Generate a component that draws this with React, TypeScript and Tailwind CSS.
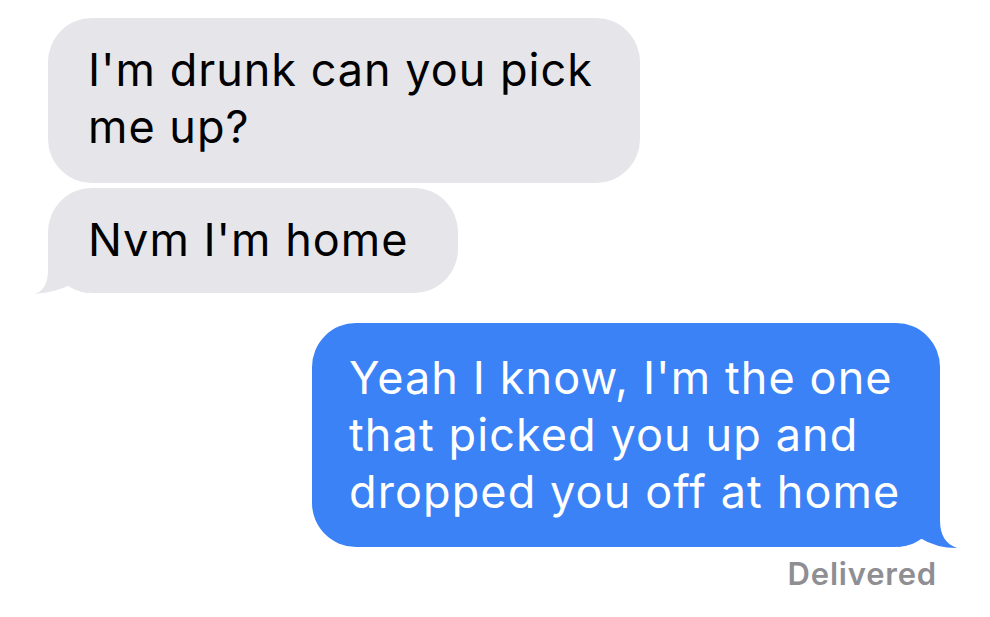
import React from "react";

const font = { fontFamily: 'Inter, "Liberation Sans", Arial, sans-serif' };

export default function App() {
  return (
    <div
      className="w-[990px] h-[617px] bg-white overflow-hidden flex flex-col pt-[18px]"
      style={font}
    >
      <div className="flex flex-col items-start pl-[48px] gap-[5px]">
        <div className="w-[592px] h-[165px] rounded-[44px] bg-[#e5e5ea] pl-[40px] pt-[23px] text-[45px] leading-[57px] text-black tracking-[1px]">
          I'm drunk can you pick
          <br />
          me up?
        </div>
        <div className="relative w-[410px] h-[105px] rounded-[44px] bg-[#e5e5ea] pl-[40px] pt-[23px] text-[45px] leading-[57px] text-black tracking-[1px]">
          Nvm I'm home
          <svg
            className="absolute left-[-20px] bottom-[-3px] w-[60px] h-[46px] overflow-visible"
            viewBox="0 0 60 46"
          >
            <path
              d="M20 0 L20 20 C20 34 15 41 7 44 Q28 42 42 35 Q50 42 60 43 L60 0 Z"
              fill="#e5e5ea"
            />
          </svg>
        </div>
      </div>
      <div className="flex flex-col items-end pr-[50px] mt-[30px]">
        <div className="relative w-[628px] h-[224px] rounded-[44px] bg-[#3b82f6] pl-[37px] pt-[26px] text-[45px] leading-[57px] text-white tracking-[1.1px]">
          Yeah I know, I'm the one
          <br />
          that picked you up and
          <br />
          dropped you off at home
          <svg
            className="absolute right-[-20px] bottom-[-3px] w-[80px] h-[50px] overflow-visible"
            viewBox="0 0 80 50"
          >
            <path
              d="M60 0 L60 20 C60 36 66 44 77 48 Q56 48 40 38 Q32 45 18 47 L18 0 Z"
              fill="#3b82f6"
            />
          </svg>
        </div>
        <div className="mt-[9px] mr-[3px] text-[31px] leading-[36px] font-semibold tracking-[0.8px] text-[#8e8e93]">
          Delivered
        </div>
      </div>
    </div>
  );
}
